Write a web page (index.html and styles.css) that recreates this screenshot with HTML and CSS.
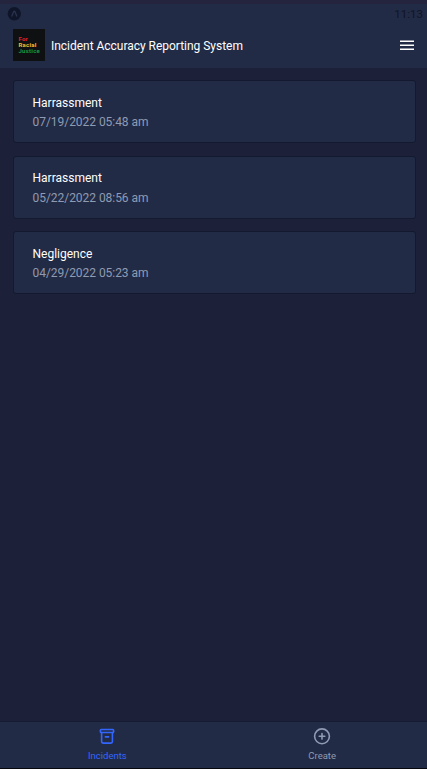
FILE: index.html
```html
<!DOCTYPE html>
<html lang="en">
<head>
<meta charset="utf-8">
<title>Incident Accuracy Reporting System</title>
<link rel="stylesheet" href="styles.css">
</head>
<body>
<div class="app">
  <header class="header">
    <div class="status">
      <svg class="status-icon" width="14" height="14" viewBox="0 0 14 14"><circle cx="7.3" cy="6.7" r="6.7" fill="#10162a"/><path d="M4.7 9.4 6.5 4.9Q7.3 3.3 8.1 4.9L9.9 9.4" fill="none" stroke="#29324f" stroke-width="1.3"/></svg>
      <span class="clock">11:13</span>
    </div>
    <div class="toolbar">
      <div class="logo"><span class="red">For</span><span class="yellow">Racial</span><span class="green">Justice</span></div>
      <h1 class="title">Incident Accuracy Reporting System</h1>
      <svg class="menu" width="14" height="12" viewBox="0 0 14 12"><path d="M0 1.25h14M0 5.25h14M0 9.25h14" stroke="#fff" stroke-width="1.5"/></svg>
    </div>
  </header>
  <main class="list">
    <article class="card"><h2 class="name">Harrassment</h2><p class="date">07/19/2022 05:48 am</p></article>
    <article class="card"><h2 class="name">Harrassment</h2><p class="date">05/22/2022 08:56 am</p></article>
    <article class="card"><h2 class="name">Negligence</h2><p class="date">04/29/2022 05:23 am</p></article>
  </main>
  <nav class="tabs">
    <a class="tab active">
      <svg width="18" height="18" viewBox="0 0 18 18" fill="none" stroke="currentColor" stroke-width="1.6" stroke-linejoin="round" stroke-linecap="round"><rect x="2.4" y="2.5" width="13.2" height="3" rx=".8"/><path d="M3.6 5.5v9.1q0 1.5 1.5 1.5h7.8q1.5 0 1.5-1.5V5.5M7.4 9.9h3.2"/></svg>
      <span>Incidents</span>
    </a>
    <a class="tab">
      <svg width="18" height="18" viewBox="0 0 18 18" fill="none" stroke="currentColor" stroke-width="1.6" stroke-linecap="round"><circle cx="9" cy="9.3" r="7.4"/><path d="M6.2 9.3h5.6M9 6.5v5.6"/></svg>
      <span>Create</span>
    </a>
  </nav>
</div>
</body>
</html>
```
FILE: styles.css
```css
* { box-sizing: border-box; }
body { margin: 0; background: #1c2039; font-family: Roboto, sans-serif; color: #fff; }
h1, h2, p { margin: 0; font-weight: 400; }
svg { display: block; }
.app { height: 769px; display: flex; flex-direction: column; border-top: 4px solid #24243f; border-bottom: 1px solid #05070d; }
.header { height: 64px; background: #222b45; }
.status { height: 20px; padding: 3px 4px 0 7px; display: flex; justify-content: space-between; }
.clock { font-size: 11.5px; line-height: 14px; color: #101426; }
.toolbar { height: 42px; padding: 0 13px; display: flex; align-items: center; }
.logo { width: 32px; height: 32px; padding: 7px 0 0 5.5px; background: #0e1011; display: flex; flex-direction: column; font: 700 6px/6px Roboto, sans-serif; letter-spacing: 0.25px; }
.red { color: #e5212b; }
.yellow { color: #f5c030; }
.green { color: #149a43; }
.title { margin: 2px 0 0 6px; font-size: 12px; line-height: 16px; letter-spacing: -0.025px; flex: 1; }
.menu { margin-top: 1px; }
.list { flex: 1; padding: 12px 11.5px 0 12.5px; display: flex; flex-direction: column; gap: 12.5px; }
.card { height: 63px; padding: 13.9px 19px; background: #222b45; border: 1px solid #13192e; border-radius: 3px; }
.name { font-size: 12px; line-height: 16px; }
.date { margin-top: 3.4px; font-size: 12px; line-height: 16px; letter-spacing: -0.04px; color: #8f9bb3; }
.tabs { height: 47px; display: flex; overflow: hidden; background: #222b45; border-top: 1px solid #151b31; }
.tab { width: 50.3%; flex: none; padding-top: 5px; display: flex; flex-direction: column; align-items: center; gap: 5px; color: #8f9bb3; font-size: 9.5px; line-height: 12px; }
.active { color: #3366ff; }
```
